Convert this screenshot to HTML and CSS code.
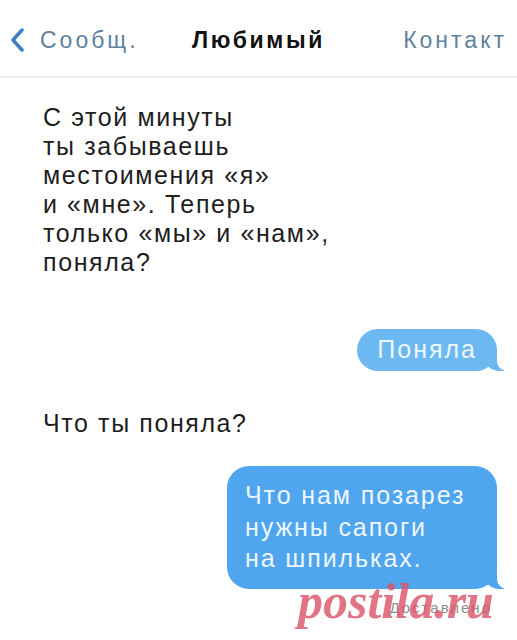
FILE: index.html
```html
<!DOCTYPE html>
<html lang="ru">
<head>
    <meta charset="UTF-8">
    <meta name="viewport" content="width=device-width, initial-scale=1.0">
    <link rel="stylesheet" href="styles.css">
    <title>Любимый</title>
</head>
<body>
    <div class="nav">
        <a class="nav-back" href="#">
            <svg class="chevron" width="14" height="24" viewBox="0 0 14 24">
                <path d="M12 2 L3 12 L12 22" fill="none" stroke="#3f7ec4" stroke-width="3.5" stroke-linecap="round" stroke-linejoin="round"/>
            </svg>
            <span>Сообщ.</span>
        </a>
        <div class="nav-title">Любимый</div>
        <a class="nav-contact" href="#">Контакт</a>
    </div>

    <div class="chat">
        <div class="msg in first">С этой минуты<br>ты забываешь<br>местоимения «я»<br>и «мне». Теперь<br>только «мы» и «нам»,<br>поняла?</div>

        <div class="msg out short">Поняла</div>

        <div class="msg in second">Что ты поняла?</div>

        <div class="msg out long">Что нам позарез<br>нужны сапоги<br>на шпильках.</div>

        <div class="status">Доставлено</div>
    </div>

    <div class="watermark">postila.ru</div>
</body>
</html>
```

FILE: styles.css
```css
*{
    box-sizing: border-box;
}
body{
    margin: 0;
    width: 517px;
    height: 640px;
    overflow: hidden;
    position: relative;
    background-color: #fff;
    font-family: "Liberation Sans", Arial, sans-serif;
}

/* top bar */
.nav{
    display: grid;
    grid-template-columns: 1fr auto 1fr;
    align-items: center;
    height: 78px;
    padding: 4px 10px 0 10px;
    border-bottom: 2px solid #efefef;
    font-size: 23px;
    letter-spacing: 3px;
}
.nav a{
    color: #5f82a0;
    text-decoration: none;
}
.nav-back{
    display: flex;
    align-items: center;
    gap: 16px;
}
.chevron{
    flex: none;
}
.nav-title{
    font-weight: bold;
    color: #111;
    letter-spacing: 2.6px;
}
.nav-contact{
    justify-self: end;
}

/* messages */
.chat{
    display: flex;
    flex-direction: column;
    font-size: 25px;
    letter-spacing: 1.6px;
}
.msg.in{
    color: #1e1e1e;
    line-height: 29px;
}
.first{
    margin: 25px 0 0 43px;
}
.second{
    margin: 38px 0 0 43px;
}
.msg.out{
    position: relative;
    align-self: flex-end;
    margin-right: 20px;
    color: #eef7ff;
}
.short{
    margin-top: 52px;
    padding: 6px 20px 8px 20px;
    line-height: 28px;
    letter-spacing: 2px;
    background-color: #6cb8f1;
    border-radius: 21px;
}
.long{
    margin-top: 28px;
    width: 270px;
    padding: 14px 16px 14px 18px;
    line-height: 31.5px;
    letter-spacing: 1.9px;
    background-color: #4fa5ee;
    border-radius: 22px;
}

/* bubble tail */
.msg.out::before{
    content: "";
    position: absolute;
    right: -7px;
    bottom: 0;
    width: 20px;
    height: 20px;
    background-color: inherit;
    border-bottom-left-radius: 16px 14px;
}
.msg.out::after{
    content: "";
    position: absolute;
    right: -26px;
    bottom: 0;
    width: 26px;
    height: 20px;
    background-color: #fff;
    border-bottom-left-radius: 10px;
}

.status{
    align-self: flex-end;
    margin: 10px 25px 0 0;
    font-size: 15px;
    line-height: 18px;
    letter-spacing: 2px;
    color: #8e8e8e;
}

.watermark{
    position: absolute;
    left: 298px;
    top: 576px;
    font-family: "Liberation Serif", serif;
    font-size: 50px;
    font-weight: bold;
    font-style: italic;
    line-height: 1;
    color: rgba(219, 86, 106, 0.82);
}
```
